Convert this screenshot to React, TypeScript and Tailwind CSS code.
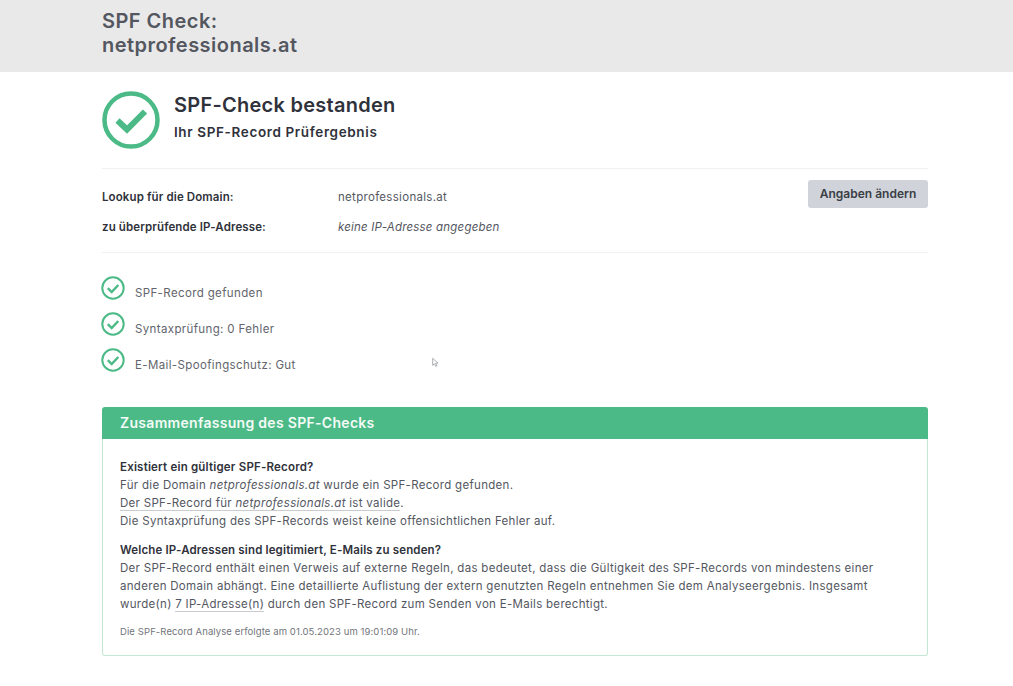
const font = "font-['Inter','Liberation_Sans',sans-serif]";

function CheckCircle({ big }: { big?: boolean }) {
  if (big) {
    return (
      <svg viewBox="0 0 58 58" className="w-[58px] h-[58px] shrink-0" fill="none">
        <circle cx="29" cy="29" r="26.5" stroke="#4cba86" strokeWidth="4.5" />
        <path d="M15.5 29.5 L25 38.5 L43 20.5" stroke="#4cba86" strokeWidth="6" />
      </svg>
    );
  }
  return (
    <svg viewBox="0 0 24 24" className="w-6 h-6 shrink-0 -mt-[1px] -ml-[1px]" fill="none">
      <circle cx="12" cy="12" r="10.7" stroke="#4cba86" strokeWidth="2" />
      <path d="M6.8 12.2 L10.7 16 L17.3 9" stroke="#4cba86" strokeWidth="2.4" />
    </svg>
  );
}

const checks = ['SPF-Record gefunden', 'Syntaxprüfung: 0 Fehler', 'E-Mail-Spoofingschutz: Gut'];

export default function App() {
  return (
    <div className={`${font} min-h-[686px] bg-white text-[#54575f] overflow-hidden`}>
      <div className="h-[72px] bg-[#e9e9ea] pl-[102px] pt-[9px]">
        <h1 className="text-[20px] leading-[24px] tracking-[0.47px] font-semibold text-[#54575f]">
          SPF Check:<br />netprofessionals.at
        </h1>
      </div>

      <div className="ml-[102px] w-[826px]">
        <div className="flex items-center gap-[14px] pt-[19px] pb-[19px] border-b border-[#f1f1f2]">
          <CheckCircle big />
          <div className="-mt-[6px]">
            <h2 className="text-[20px] leading-[28px] tracking-[0.26px] font-semibold text-[#30323b]">SPF-Check bestanden</h2>
            <p className="mt-[1px] text-[13.5px] leading-[24px] tracking-[0.63px] font-semibold text-[#30323b]">Ihr SPF-Record Prüfergebnis</p>
          </div>
        </div>

        <div className="flex justify-between h-[84px] border-b border-[#f1f1f2]">
          <div className="pt-[13px] text-[11.5px] leading-[30px] tracking-[0.3px]">
            <div className="flex">
              <span className="w-[236px] font-semibold text-[#30323b] tracking-[0.12px]">Lookup für die Domain:</span>
              <span>netprofessionals.at</span>
            </div>
            <div className="flex">
              <span className="w-[236px] font-semibold text-[#30323b] tracking-[0.12px]">zu überprüfende IP-Adresse:</span>
              <span className="italic tracking-[0.2px]">keine IP-Adresse angegeben</span>
            </div>
          </div>
          <button className="mt-[11px] h-[28px] w-[120px] rounded-[3px] bg-[#d0d4da] text-[12px] font-semibold text-[#3b3e47]">
            Angaben ändern
          </button>
        </div>

        <ul className="pt-[24px] flex flex-col gap-[12px]">
          {checks.map(c => (
            <li key={c} className="flex items-start gap-[10px] h-[24px]">
              <CheckCircle />
              <span className="mt-[7px] text-[11.5px] leading-[18px] tracking-[0.37px] text-[#62656c]">{c}</span>
            </li>
          ))}
        </ul>

        <div className="mt-[34px]">
          <div className="h-[32px] bg-[#4cba86] rounded-t-[3px] pl-[18px] text-[14px] leading-[32px] tracking-[0.3px] font-semibold text-[#f4fbf7]">
            Zusammenfassung des SPF-Checks
          </div>
          <div className="h-[217px] border border-t-0 border-[#c4e8d6] rounded-b-[3px] pl-[17px] pr-[17px] pt-[19px] text-[11.5px] leading-[18px] tracking-[0.3px]">
            <p className="font-semibold text-[#30323b] tracking-[0.2px]">Existiert ein gültiger SPF-Record?</p>
            <p>Für die Domain <em>netprofessionals.at</em> wurde ein SPF-Record gefunden.</p>
            <p><span className="border-b border-[#c9cbd0]">Der SPF-Record für <em>netprofessionals.at</em> ist valide</span>.</p>
            <p>Die Syntaxprüfung des SPF-Records weist keine offensichtlichen Fehler auf.</p>
            <p className="mt-[11px] font-semibold text-[#30323b] tracking-[0.15px]">Welche IP-Adressen sind legitimiert, E-Mails zu senden?</p>
            <p>
              Der SPF-Record enthält einen Verweis auf externe Regeln, das bedeutet, dass die Gültigkeit des SPF-Records von mindestens einer<br />
              anderen Domain abhängt. Eine detaillierte Auflistung der extern genutzten Regeln entnehmen Sie dem Analyseergebnis. Insgesamt<br />
              wurde(n) <span className="border-b border-[#c9cbd0]">7 IP-Adresse(n)</span> durch den SPF-Record zum Senden von E-Mails berechtigt.
            </p>
            <p className="mt-[11px] text-[9.5px] leading-[16px] tracking-[0.1px] text-[#72757c]">Die SPF-Record Analyse erfolgte am 01.05.2023 um 19:01:09 Uhr.</p>
          </div>
        </div>
      </div>

      <svg viewBox="0 0 10 14" className="fixed left-[432px] top-[357px] w-[7px] h-[11px]" fill="#fff" stroke="#8a8d92" strokeWidth="1">
        <path d="M1 1 L1 11 L3.5 8.8 L5.3 12.6 L7 11.8 L5.3 8.2 L8.6 8 Z" />
      </svg>
    </div>
  );
}
